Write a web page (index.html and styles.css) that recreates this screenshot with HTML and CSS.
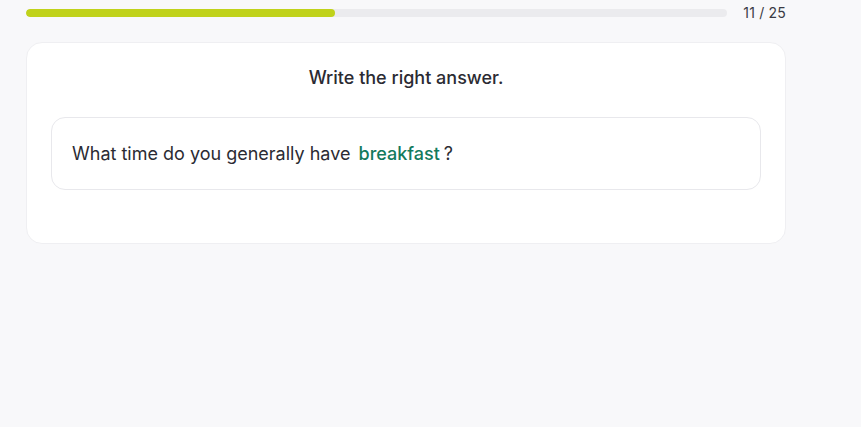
FILE: index.html
```html
<!DOCTYPE html>
<html lang="en">

<head>
  <meta charset="UTF-8" />
  <meta name="viewport" content="width=device-width, initial-scale=1.0" />
  <title>Exercise</title>
  <link rel="stylesheet" href="styles.css">
</head>

<body>
  <div id="exercise-container">
    <div class="progress-row">
      <div class="progress-track">
        <div class="progress-fill" style="width: 44%"></div>
      </div>
      <span class="progress-count">11 / 25</span>
    </div>

    <div class="question-card">
      <h2 class="instruction">Write the right answer.</h2>
      <div class="sentence-box">
        <p class="sentence">What time do you generally have <span class="answer">breakfast</span>?</p>
      </div>
    </div>
  </div>
</body>

</html>
```

FILE: styles.css
```css
body {
  font-family: Inter, "Noto Sans", Arial, sans-serif;
  background-color: #f8f8fa;
  color: #2b2b33;
  margin: 0;
}

#exercise-container {
  width: 760px;
  margin-left: 26px;
}

.progress-row {
  display: flex;
  align-items: center;
  gap: 16px;
  height: 25px;
}

.progress-track {
  flex: 1;
  height: 8px;
  background-color: #ebebee;
  border-radius: 4px;
  overflow: hidden;
}

.progress-fill {
  height: 100%;
  background-color: #c0d21a;
  border-radius: 4px;
}

.progress-count {
  font-size: 14px;
  letter-spacing: 0.2px;
  color: #3a3a44;
}

.question-card {
  margin-top: 17px;
  padding: 22px 24px 53px;
  background-color: #ffffff;
  border: 1px solid #efeff2;
  border-radius: 16px;
}

.instruction {
  margin: 0 0 27px;
  font-size: 18px;
  font-weight: 500;
  line-height: 25px;
  text-align: center;
}

.sentence-box {
  padding: 24px 20px;
  border: 1px solid #e8e8ec;
  border-radius: 14px;
}

.sentence {
  margin: 0;
  font-size: 18px;
  line-height: 23px;
}

.answer {
  margin: 0 4px 0 3px;
  color: #137a5c;
  font-weight: 500;
}
```
